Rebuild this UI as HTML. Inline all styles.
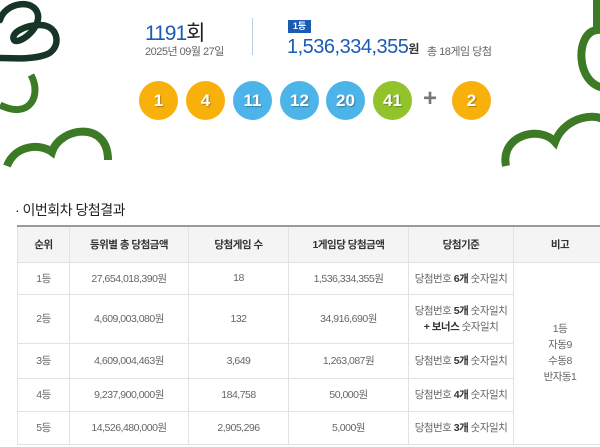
<!DOCTYPE html>
<html><head><meta charset="utf-8"><style>
*{margin:0;padding:0;box-sizing:border-box}
body{width:600px;height:447px;overflow:hidden;background:#fff;font-family:"Liberation Sans","Noto Sans CJK KR",sans-serif;position:relative;color:#555}
.a{position:absolute}
.ball{position:absolute;top:81px;width:39px;height:39px;border-radius:50%;color:#fff;font-weight:bold;font-size:17px;text-align:center;line-height:39px;text-shadow:1px 1px 1px rgba(0,0,0,.3)}
.y{background:#f8b10a}.b{background:#4db4ea}.g{background:#92c32a}
table{position:absolute;left:17px;top:225px;width:590px;border-collapse:collapse;font-size:10.5px;color:#666;letter-spacing:-0.5px}
td,th{border:1px solid #e2e2e2;text-align:center;font-weight:normal}
th{background:#f4f4f4;color:#333;height:36px;border-top:2px solid #999;font-weight:bold}
td b{color:#333}
</style></head><body>
<svg class="a" style="left:0;top:0" width="600" height="170">
<path d="M0 20 C5 2 35 -2 38 15 C40 30 18 45 14 40 C10 33 25 25 40 25 C60 25 62 50 45 55 C30 60 10 58 -2 58" fill="none" stroke="#173526" stroke-width="6.5" stroke-linecap="round"/>
<path d="M31 75 C42 95 30 120 0 105" fill="none" stroke="#3d7a25" stroke-width="7"/>
<path d="M7 166 C15 145 40 143 52 152 C60 127 108 120 108 160" fill="none" stroke="#3d7a25" stroke-width="8"/>
<path d="M597 0 L597 30 C575 32 575 85 605 88" fill="none" stroke="#3d7a25" stroke-width="8"/>
<path d="M506 166 C500 135 540 125 555 142 C565 115 600 112 605 122" fill="none" stroke="#3d7a25" stroke-width="8"/>
</svg>
<div class="a" style="left:145px;top:17px;font-size:21px;color:#1a5bb5;letter-spacing:-1px">1191<span style="color:#222">회</span></div>
<div class="a" style="left:145px;top:43px;font-size:11px;color:#666;letter-spacing:-0.5px">2025년 09월 27일</div>
<div class="a" style="left:252px;top:18px;width:1px;height:37px;background:#b8cfe6"></div>
<div class="a" style="left:288px;top:20px;width:23px;height:13px;background:#1a5bb5;color:#fff;font-size:9px;text-align:center;line-height:13px;font-weight:bold">1등</div>
<div class="a" style="left:287px;top:36px;font-size:20px;color:#1a5bb5;letter-spacing:-0.5px">1,536,334,355<span style="font-size:12px;color:#333;font-weight:bold">원</span></div>
<div class="a" style="left:427px;top:43px;font-size:11px;color:#666;letter-spacing:-0.5px">총 18게임 당첨</div>
<div class="ball y" style="left:139px">1</div>
<div class="ball y" style="left:186px">4</div>
<div class="ball b" style="left:233px">11</div>
<div class="ball b" style="left:280px">12</div>
<div class="ball b" style="left:326px">20</div>
<div class="ball g" style="left:373px">41</div>
<div class="a" style="left:423px;top:85px;font-size:24px;color:#777;font-weight:bold">+</div>
<div class="ball y" style="left:452px">2</div>
<div class="a" style="left:15px;top:200px;font-size:14px;color:#222;letter-spacing:-0.5px">· 이번회차 당첨결과</div>
<table>
<colgroup><col style="width:52px"><col style="width:119px"><col style="width:100px"><col style="width:120px"><col style="width:105px"><col></colgroup>
<tr><th>순위</th><th>등위별 총 당첨금액</th><th>당첨게임 수</th><th>1게임당 당첨금액</th><th>당첨기준</th><th>비고</th></tr>
<tr style="height:32px"><td>1등</td><td>27,654,018,390원</td><td>18</td><td>1,536,334,355원</td><td>당첨번호 <b>6개</b> 숫자일치</td><td rowspan="5" style="line-height:16px">1등<br>자동9<br>수동8<br>반자동1</td></tr>
<tr style="height:49px"><td>2등</td><td>4,609,003,080원</td><td>132</td><td>34,916,690원</td><td style="line-height:16px">당첨번호 <b>5개</b> 숫자일치<br><b>+ 보너스</b> 숫자일치</td></tr>
<tr style="height:35px"><td>3등</td><td>4,609,004,463원</td><td>3,649</td><td>1,263,087원</td><td>당첨번호 <b>5개</b> 숫자일치</td></tr>
<tr style="height:33px"><td>4등</td><td>9,237,900,000원</td><td>184,758</td><td>50,000원</td><td>당첨번호 <b>4개</b> 숫자일치</td></tr>
<tr style="height:33px"><td>5등</td><td>14,526,480,000원</td><td>2,905,296</td><td>5,000원</td><td>당첨번호 <b>3개</b> 숫자일치</td></tr>
</table>
</body></html>
